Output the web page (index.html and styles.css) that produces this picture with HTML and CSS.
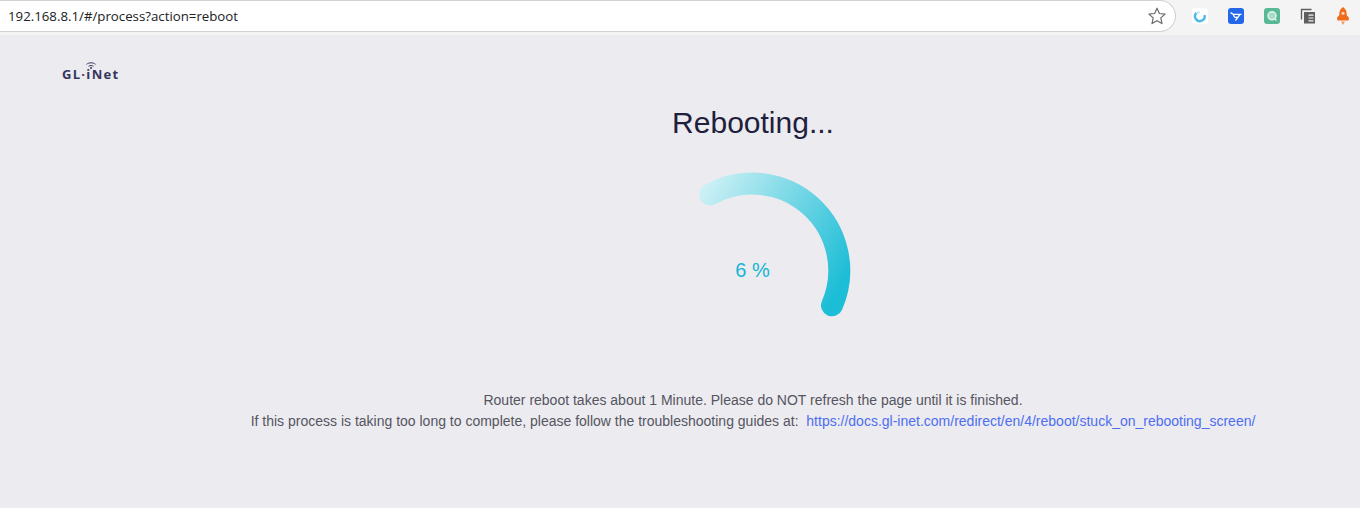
FILE: index.html
```html
<!DOCTYPE html>
<html lang="en">
<head>
    <meta charset="UTF-8">
    <meta name="viewport" content="width=device-width, initial-scale=1.0">
    <title>Rebooting</title>
    <link rel="stylesheet" href="styles.css">
</head>
<body>
    <header class="toolbar">
        <div class="address">
            <span class="url">192.168.8.1/#/process?action=reboot</span>
            <svg class="star" width="20" height="20" viewBox="0 0 20 20">
                <path d="M10 2.2l2.4 5.3 5.700.6-4.300 3.800 1.200 5.700-5-2.900-5 2.900 1.200-5.700-4.300-3.800 5.700-.6z" fill="none" stroke="#6a6a6a" stroke-width="1.200" stroke-linejoin="round"/>
            </svg>
        </div>
        <div class="extensions">
            <span class="ext ext-white">
                <svg width="16" height="16" viewBox="0 0 16 16">
                    <path d="M4.500 4.800A4.800 4.800 0 1 0 12.500 7" fill="none" stroke="#4db8ea" stroke-width="2.400"/>
                    <path d="M4.500 4.800l3.300-.6" stroke="#b5e2f7" stroke-width="1.600"/>
                </svg>
            </span>
            <span class="ext ext-blue">
                <svg width="16" height="16" viewBox="0 0 16 16">
                    <path d="M2.500 4.600l2.800 1.800h8.200M5.500 6.400c.2 2.400 1.500 3.400 3.500 2.800M11.800 6.600L7.500 12.500" fill="none" stroke="#fff" stroke-width="1.300"/>
                </svg>
            </span>
            <span class="ext ext-green">
                <svg width="16" height="16" viewBox="0 0 16 16">
                    <circle cx="8" cy="7.800" r="4" fill="#a9dcc9" stroke="#e0f4ec" stroke-width="1.500"/>
                    <path d="M10.500 10.500l2 2" stroke="#e0f4ec" stroke-width="1.300"/>
                </svg>
            </span>
            <svg class="ext-plain" width="16" height="16" viewBox="0 0 16 16">
                <path d="M1.500 11.500V1.500h10" fill="none" stroke="#5f5f5f" stroke-width="1.400"/>
                <path d="M4 4h11v11.500H4z" fill="#5f5f5f"/>
                <path d="M8.500 7.200h5M8.500 10h5M8.500 12.800h5" stroke="#f3f3f3" stroke-width="1.200"/>
            </svg>
            <svg class="ext-plain" width="14" height="18" viewBox="0 0 14 18">
                <path d="M7 0c3 2 4 4.800 3.600 8l2.400 2.800-.4 2.800H1.400L1 10.800 3.400 8C3 4.800 4 2 7 0z" fill="#ee6c1c"/>
                <circle cx="7" cy="6.200" r="1.500" fill="#fbd9c2"/>
                <path d="M5 14.400h4L7 18z" fill="#f59a5c"/>
            </svg>
        </div>
    </header>
    <div class="page">
        <aside class="side">
            <div class="logo">
                <svg class="logo-wifi" width="10" height="7" viewBox="0 0 10 7">
                    <path d="M.5 2.300c2.600-2 6.400-2 9 0M2.500 4.300c1.500-1 3.500-1 5 0" fill="none" stroke="#35355f" stroke-width="1"/>
                    <circle cx="5" cy="6" r="1" fill="#35355f"/>
                </svg>
                <span>GL·iNet</span>
            </div>
        </aside>
        <main class="content">
            <h1>Rebooting...</h1>
            <div class="progress">
                <svg width="200" height="200" viewBox="0 0 200 200">
                    <defs>
                        <linearGradient id="arc" gradientUnits="userSpaceOnUse" x1="30" y1="40" x2="180" y2="130">
                            <stop offset="0" stop-color="#d3f2f6"/>
                            <stop offset="1" stop-color="#1cbdd6"/>
                        </linearGradient>
                    </defs>
                    <path d="M57 24.500A87 87 0 0 1 179 135.300" fill="none" stroke="url(#arc)" stroke-width="22" stroke-linecap="round"/>
                </svg>
                <span class="percent">6 %</span>
            </div>
            <p class="note">Router reboot takes about 1 Minute. Please do NOT refresh the page until it is finished.</p>
            <p class="note">If this process is taking too long to complete, please follow the troubleshooting guides at:&nbsp; <a href="#">https://docs.gl-inet.com/redirect/en/4/reboot/stuck_on_rebooting_screen/</a></p>
        </main>
    </div>
</body>
</html>
```

FILE: styles.css
```css
* {
    margin: 0;
    padding: 0;
    box-sizing: border-box;
}

body {
    font-family: "Liberation Sans", Arial, sans-serif;
    background-color: #ecebf0;
    height: 508px;
    overflow: hidden;
}

.toolbar {
    display: flex;
    align-items: flex-start;
    height: 35px;
    background-color: #f4f4f4;
}

.address {
    display: flex;
    align-items: center;
    justify-content: space-between;
    width: 1176px;
    height: 32px;
    padding: 0 8px;
    background-color: #fff;
    border: 1px solid #d2d2d2;
    border-left: 0;
    border-radius: 0 16px 16px 0;
}

.url {
    font-family: "Open Sans", sans-serif;
    font-size: 13.25px;
    color: #202124;
}

.extensions {
    display: flex;
    align-items: center;
    gap: 20px;
    height: 32px;
    padding-left: 16px;
}

.ext {
    display: flex;
    align-items: center;
    justify-content: center;
    width: 16px;
    height: 16px;
    border-radius: 3px;
}

.ext-white {
    background-color: #fff;
}

.ext-blue {
    background-color: #2467e8;
}

.ext-green {
    background-color: #58b997;
}

.page {
    display: flex;
}

.side {
    width: 146px;
    padding: 30px 0 0 62px;
}

.logo {
    position: relative;
    font-family: "Open Sans", sans-serif;
    font-size: 13px;
    font-weight: bold;
    letter-spacing: 1.3px;
    color: #35355f;
    white-space: nowrap;
}

.logo-wifi {
    position: absolute;
    left: 24px;
    top: -3px;
}

.content {
    flex: 1;
    display: flex;
    flex-direction: column;
    align-items: center;
}

h1 {
    margin-top: 69px;
    font-size: 30px;
    font-weight: normal;
    line-height: 37px;
    color: #20203c;
}

.progress {
    position: relative;
    width: 200px;
    height: 200px;
    margin: 29px 0 20px;
}

.percent {
    position: absolute;
    left: 0;
    right: 1px;
    top: 89px;
    text-align: center;
    font-size: 20px;
    color: #14b6d4;
}

.note {
    font-size: 14px;
    line-height: 21px;
    color: #55555f;
}

.note a {
    color: #4d6ef0;
    text-decoration: none;
}
```
